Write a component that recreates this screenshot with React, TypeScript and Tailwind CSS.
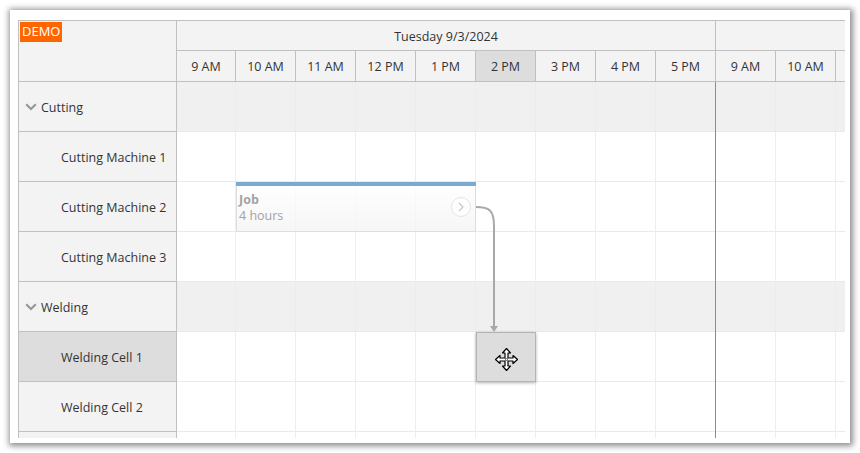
import React from 'react';

const hours = ['9 AM', '10 AM', '11 AM', '12 PM', '1 PM', '2 PM', '3 PM', '4 PM', '5 PM', '9 AM', '10 AM', ''];

const rows = [
  { name: 'Cutting', group: true },
  { name: 'Cutting Machine 1' },
  { name: 'Cutting Machine 2', job: true },
  { name: 'Cutting Machine 3' },
  { name: 'Welding', group: true },
  { name: 'Welding Cell 1', active: true, target: true },
  { name: 'Welding Cell 2' },
  { name: '' },
];

function Chevron() {
  return (
    <svg width="12" height="8" viewBox="0 0 12 8" className="-mt-[3px] shrink-0">
      <path d="M1.2 1.2 L6 6 L10.8 1.2" fill="none" stroke="#999999" strokeWidth="2.2" />
    </svg>
  );
}

function MoveCursor() {
  return (
    <svg width="23" height="23" viewBox="0 0 23 23" className="mt-[5px]">
      <path
        d="M11.5 0.5 L15.5 5 H13 V10 H18 V7.5 L22.5 11.5 L18 15.5 V13 H13 V18 H15.5 L11.5 22.5 L7.5 18 H10 V13 H5 V15.5 L0.5 11.5 L5 7.5 V10 H10 V5 H7.5 Z"
        fill="#fff"
        stroke="#000"
        strokeWidth="1.2"
        strokeLinejoin="round"
      />
      <path d="M10.5 10.5 H12.5 V12.5 H10.5 Z" fill="none" stroke="#444" strokeWidth="0.7" />
    </svg>
  );
}

function JobEvent() {
  return (
    <div className="absolute left-[59px] top-0 z-10 flex h-[50px] w-[240px] flex-col border-x border-b border-[#dddddd] bg-gradient-to-b from-white/80 to-[#f4f4f4]/80">
      <div className="-mx-px h-1 shrink-0 bg-[#7ba9cf]" />
      <div className="flex flex-1 items-center justify-between pl-[2px] pr-[4px] text-[#a3a3a3]">
        <div className="-mt-[2px] flex flex-col leading-[16px]">
          <span className="font-bold">Job</span>
          <span>4 hours</span>
        </div>
        <div className="-mt-[3px] flex h-5 w-5 items-center justify-center rounded-full border border-[#e4e4e4] bg-white/70">
          <svg width="8" height="10" viewBox="0 0 8 10">
            <path d="M2 1 L6 5 L2 9" fill="none" stroke="#c4c4c4" strokeWidth="1.1" />
          </svg>
        </div>
      </div>
    </div>
  );
}

function Link() {
  return (
    <svg width="24" height="130" viewBox="0 0 24 130" className="absolute left-[299px] top-[20px] z-20">
      <path d="M0 5 C13 5 18 8 18 24 V125" fill="none" stroke="#a8a8a8" strokeWidth="2" />
      <path d="M14 124 H22 L18 130 Z" fill="#a8a8a8" />
    </svg>
  );
}

export default function App() {
  return (
    <div className="h-[453px] w-[860px] overflow-hidden bg-white p-[10px] font-['Open_Sans',sans-serif] text-[12.5px] text-[#333333]">
      <div className="h-[433px] w-[840px] bg-white pb-[5px] pl-2 pr-[5px] pt-[10px] shadow-[1px_1px_6px_2px_rgba(0,0,0,0.45)]">
        <div className="relative flex h-[418px] w-[827px] overflow-hidden border-l border-t border-[#c0c0c0]">
          <div className="absolute left-[1px] top-[1px] z-20 flex h-[20px] items-center bg-[#ff6600] px-[2px] text-[13px] text-white">
            DEMO
          </div>

          {/* Row headers */}
          <div className="flex w-[158px] shrink-0 flex-col border-r border-[#c0c0c0] bg-[#f3f3f3]">
            <div className="h-[61px] shrink-0 border-b border-[#c0c0c0]" />
            {rows.map((r, i) => (
              <div
                key={i}
                className={
                  'flex h-[50px] shrink-0 items-center border-b border-[#c0c0c0] pt-[3px] ' +
                  (r.active ? 'bg-[#dddddd] ' : '') +
                  (r.group ? 'gap-[4px] pl-[6px]' : 'pl-[42px]')
                }
              >
                {r.group && <Chevron />}
                <span>{r.name}</span>
              </div>
            ))}
          </div>

          {/* Time header and grid */}
          <div className="relative flex min-w-0 flex-1 flex-col">
            <div className="flex h-[30px] shrink-0 border-b border-[#c0c0c0] bg-[#f3f3f3]">
              <div className="flex w-[539px] shrink-0 items-center justify-center border-r border-[#c0c0c0] pt-[3px]">
                Tuesday 9/3/2024
              </div>
            </div>
            <div className="flex h-[31px] shrink-0 border-b border-[#c0c0c0] bg-[#f3f3f3]">
              {hours.map((h, i) => (
                <div
                  key={i}
                  className={
                    'flex shrink-0 items-center justify-center border-r border-[#c0c0c0] pt-[2px] ' +
                    (i === 0 ? 'w-[59px] ' : 'w-[60px] ') +
                    (i === 5 ? 'bg-[#dddddd]' : '')
                  }
                >
                  {h}
                </div>
              ))}
            </div>

            {rows.map((r, i) => (
              <div
                key={i}
                className={
                  'relative flex h-[50px] shrink-0 border-b border-[#eaeaea] ' + (r.group ? 'bg-[#f0f0f0]' : 'bg-white')
                }
              >
                {hours.map((_, j) => (
                  <div
                    key={j}
                    className={
                      'h-full shrink-0 border-r ' +
                      (j === 0 ? 'w-[59px] ' : 'w-[60px] ') +
                      (r.group ? 'border-[#ececec]' : 'border-[#eeeeee]')
                    }
                  />
                ))}
                {r.job && <JobEvent />}
                {r.job && <Link />}
                {r.target && (
                  <div className="absolute left-[299px] top-0 z-10 flex h-[50px] w-[60px] items-center justify-center border border-[#b4b4b4] bg-[#dddddd] shadow-[0_1px_3px_rgba(0,0,0,0.3)]">
                    <MoveCursor />
                  </div>
                )}
              </div>
            ))}

            {/* Day separator */}
            <div className="absolute bottom-0 left-[538px] top-[61px] z-10 w-px bg-[#8c8c8c]" />
          </div>
        </div>
      </div>
    </div>
  );
}
